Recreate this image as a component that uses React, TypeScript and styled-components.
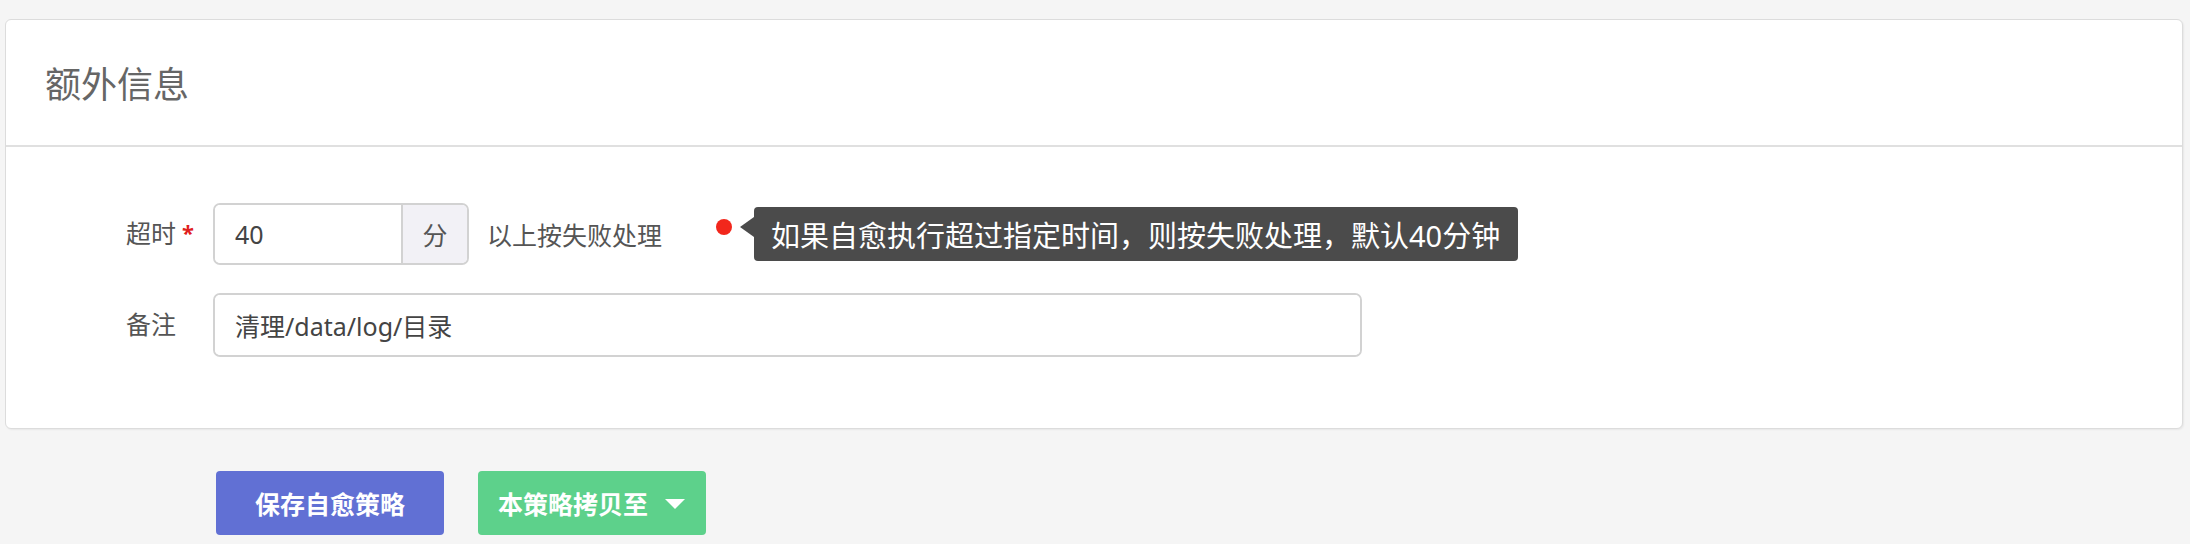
import React from "react";
import styled, { createGlobalStyle } from "styled-components";

const Global = createGlobalStyle`
  html, body {
    margin: 0;
    padding: 0;
    background: #f5f5f5;
  }
  body {
    font-family: "Noto Sans", "Noto Sans CJK SC", sans-serif;
    color: #555;
  }
  * { box-sizing: border-box; }
`;

const Page = styled.div`
  padding: 19px 7px 0 5px;
`;

const Card = styled.section`
  background: #fff;
  border: 1px solid #dcdcdc;
  border-radius: 6px;
  box-shadow: 1px 1px 2px rgba(0, 0, 0, 0.06);
`;

const CardHeader = styled.header`
  height: 127px;
  display: flex;
  align-items: center;
  padding-left: 39px;
  border-bottom: 2px solid #e0e0e0;
`;

const Title = styled.h2`
  margin: 0;
  font-size: 36px;
  font-weight: 400;
  color: #666;
`;

const CardBody = styled.div`
  padding: 56px 0 71px 120px;
  display: flex;
  flex-direction: column;
  gap: 28px;
`;

const Row = styled.div`
  display: flex;
  align-items: center;
`;

const Label = styled.label`
  width: 87px;
  flex: none;
  font-size: 25px;
  color: #555;
  display: flex;
  align-items: center;
  margin-top: -4px;
`;

const Required = styled.span`
  color: #e0201c;
  font-size: 22px;
  margin-left: 6px;
  font-weight: 700;
`;

const InputGroup = styled.div<{ w: number; h: number }>`
  display: flex;
  height: ${(p) => p.h}px;
  border: 2px solid #d2d2d2;
  border-radius: 7px;
  overflow: hidden;
  width: ${(p) => p.w}px;
  flex: none;
`;

const Field = styled.div`
  flex: 1;
  display: flex;
  align-items: center;
  padding-left: 20px;
  font-size: 25px;
  color: #444;
  background: #fff;
`;

const Addon = styled.div`
  width: 66px;
  flex: none;
  border-left: 2px solid #d2d2d2;
  background: #f2f1f6;
  display: flex;
  align-items: center;
  justify-content: center;
  font-size: 25px;
  color: #555;
`;

const After = styled.span`
  margin-left: 18px;
  font-size: 25px;
  color: #555;
`;

const Hint = styled.div`
  position: relative;
  align-self: flex-start;
  margin-top: 16px;
  margin-left: 54px;
  width: 16px;
  height: 16px;
  border-radius: 50%;
  background: #f2271c;
`;

const Tooltip = styled.div`
  position: absolute;
  left: 38px;
  top: -12px;
  height: 54px;
  padding: 0 18px 0 17px;
  display: flex;
  align-items: center;
  white-space: nowrap;
  background: #4b4b4b;
  color: #fff;
  font-size: 29px;
  border-radius: 4px;

  &::before {
    content: "";
    position: absolute;
    left: -14px;
    top: 10px;
    border-top: 10px solid transparent;
    border-bottom: 10px solid transparent;
    border-right: 14px solid #4b4b4b;
  }
`;

const Actions = styled.div`
  display: flex;
  gap: 34px;
  padding: 42px 0 0 211px;
`;

const Button = styled.button<{ tone: "primary" | "success" }>`
  height: 64px;
  border: none;
  border-radius: 4px;
  padding: 0 ${(p) => (p.tone === "primary" ? "39px" : "21px 0 20px")};
  font-family: inherit;
  font-size: 25px;
  font-weight: 600;
  color: #fff;
  background: ${(p) => (p.tone === "primary" ? "#6170d4" : "#5dd18b")};
  display: flex;
  align-items: center;
  gap: 17px;
  cursor: pointer;
`;

const Caret = styled.span`
  width: 0;
  height: 0;
  border-left: 10px solid transparent;
  border-right: 10px solid transparent;
  border-top: 10px solid #fff;
  margin-top: 2px;
`;

export default function App() {
  return (
    <>
      <Global />
      <Page>
        <Card>
          <CardHeader>
            <Title>额外信息</Title>
          </CardHeader>
          <CardBody>
            <Row>
              <Label>
                超时<Required>*</Required>
              </Label>
              <InputGroup w={256} h={62}>
                <Field>40</Field>
                <Addon>分</Addon>
              </InputGroup>
              <After>以上按失败处理</After>
              <Hint>
                <Tooltip>如果自愈执行超过指定时间，则按失败处理，默认40分钟</Tooltip>
              </Hint>
            </Row>
            <Row>
              <Label>备注</Label>
              <InputGroup w={1149} h={64}>
                <Field>清理/data/log/目录</Field>
              </InputGroup>
            </Row>
          </CardBody>
        </Card>
        <Actions>
          <Button tone="primary">保存自愈策略</Button>
          <Button tone="success">
            本策略拷贝至
            <Caret />
          </Button>
        </Actions>
      </Page>
    </>
  );
}
